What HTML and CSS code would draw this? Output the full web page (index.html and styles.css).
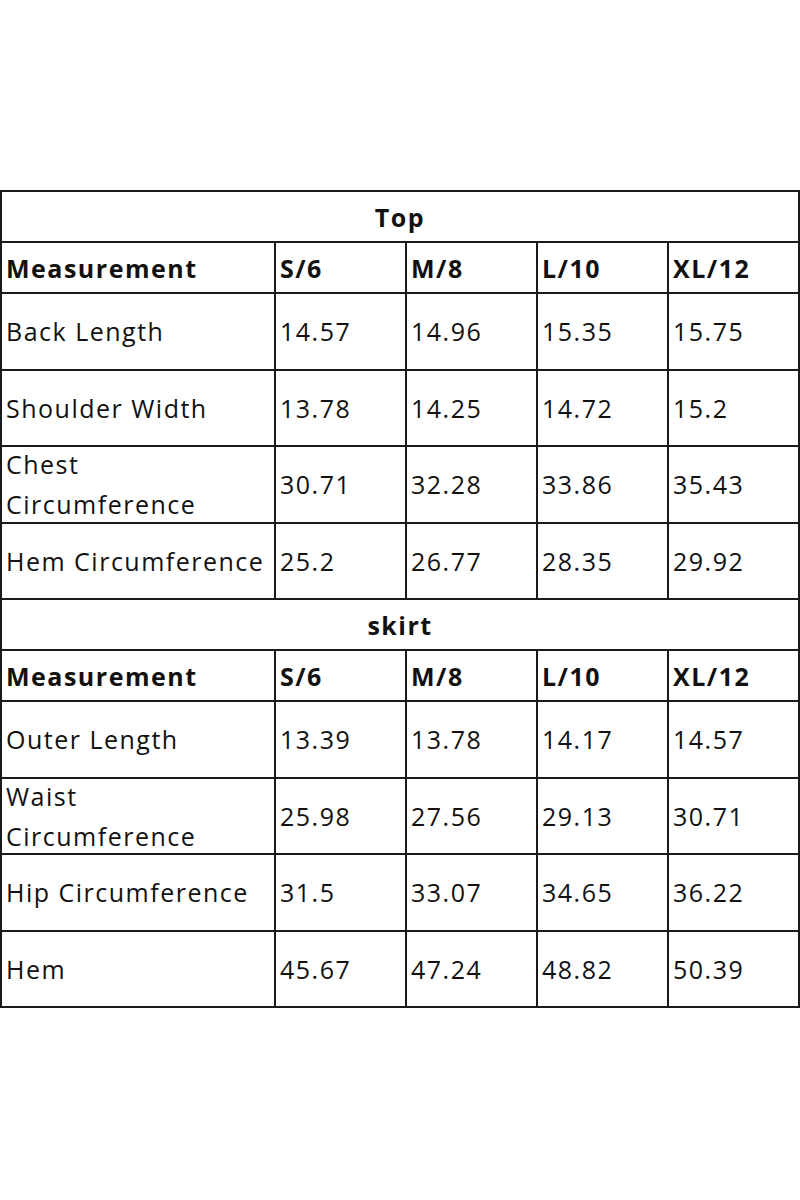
FILE: index.html
```html
<!DOCTYPE html>
<html>
<head>
<meta charset="utf-8">
<link rel="stylesheet" href="styles.css">
</head>
<body>
<div class="page">
<table class="size-table">
<colgroup>
<col class="c-name"><col class="c-size"><col class="c-size"><col class="c-size"><col class="c-size">
</colgroup>
<tbody>
<tr class="title-row"><td colspan="5"><div class="cell">Top</div></td></tr>
<tr class="head-row"><td><div class="cell">Measurement</div></td><td><div class="cell">S/6</div></td><td><div class="cell">M/8</div></td><td><div class="cell">L/10</div></td><td><div class="cell">XL/12</div></td></tr>
<tr class="data-row"><td><div class="cell">Back Length</div></td><td><div class="cell">14.57</div></td><td><div class="cell">14.96</div></td><td><div class="cell">15.35</div></td><td><div class="cell">15.75</div></td></tr>
<tr class="data-row"><td><div class="cell">Shoulder Width</div></td><td><div class="cell">13.78</div></td><td><div class="cell">14.25</div></td><td><div class="cell">14.72</div></td><td><div class="cell">15.2</div></td></tr>
<tr class="data-row"><td><div class="cell">Chest Circumference</div></td><td><div class="cell">30.71</div></td><td><div class="cell">32.28</div></td><td><div class="cell">33.86</div></td><td><div class="cell">35.43</div></td></tr>
<tr class="data-row"><td><div class="cell">Hem Circumference</div></td><td><div class="cell">25.2</div></td><td><div class="cell">26.77</div></td><td><div class="cell">28.35</div></td><td><div class="cell">29.92</div></td></tr>
<tr class="title-row"><td colspan="5"><div class="cell">skirt</div></td></tr>
<tr class="head-row"><td><div class="cell">Measurement</div></td><td><div class="cell">S/6</div></td><td><div class="cell">M/8</div></td><td><div class="cell">L/10</div></td><td><div class="cell">XL/12</div></td></tr>
<tr class="data-row"><td><div class="cell">Outer Length</div></td><td><div class="cell">13.39</div></td><td><div class="cell">13.78</div></td><td><div class="cell">14.17</div></td><td><div class="cell">14.57</div></td></tr>
<tr class="data-row"><td><div class="cell">Waist Circumference</div></td><td><div class="cell">25.98</div></td><td><div class="cell">27.56</div></td><td><div class="cell">29.13</div></td><td><div class="cell">30.71</div></td></tr>
<tr class="data-row"><td><div class="cell">Hip Circumference</div></td><td><div class="cell">31.5</div></td><td><div class="cell">33.07</div></td><td><div class="cell">34.65</div></td><td><div class="cell">36.22</div></td></tr>
<tr class="data-row"><td><div class="cell">Hem</div></td><td><div class="cell">45.67</div></td><td><div class="cell">47.24</div></td><td><div class="cell">48.82</div></td><td><div class="cell">50.39</div></td></tr>
</tbody>
</table>
</div>
</body>
</html>
```
FILE: styles.css
```css
html, body {
  margin: 0;
  padding: 0;
  background: #ffffff;
}
.page {
  width: 800px;
  height: 1200px;
  padding-top: 190px;
  box-sizing: border-box;
}
.size-table {
  border-collapse: collapse;
  table-layout: fixed;
  width: 799px;
  font-family: "Open Sans", "Noto Sans", sans-serif;
  font-size: 25px;
  letter-spacing: 1.5px;
  color: #111111;
}
.c-name { width: 274px; }
.c-size { width: 131px; }
.size-table td {
  border: 2px solid #1a1a1a;
  padding: 0;
  vertical-align: middle;
}
.cell {
  display: flex;
  align-items: center;
  padding-left: 4px;
  line-height: 40px;
  overflow: visible;
}
.title-row .cell {
  height: 49px;
  justify-content: center;
  padding-left: 0;
  font-weight: 700;
}
.head-row .cell {
  height: 49px;
  font-weight: 700;
}
.data-row .cell {
  height: 74.5px;
}
```
